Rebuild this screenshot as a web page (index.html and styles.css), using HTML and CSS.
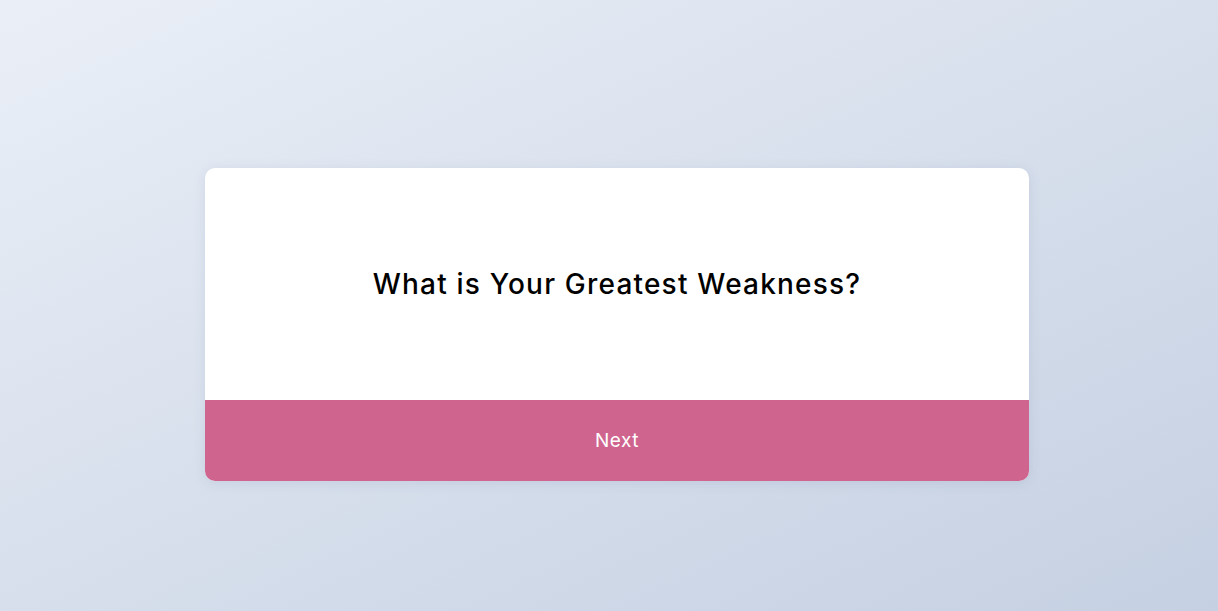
FILE: index.html
```html
<!DOCTYPE html>
<html lang="en">
<head>
<meta charset="utf-8">
<title>Question</title>
<link rel="stylesheet" href="styles.css">
</head>
<body>
<main class="page">
  <section class="card">
    <div class="card-body">
      <h1 class="question">What is Your Greatest Weakness?</h1>
    </div>
    <button class="next-btn" type="button">Next</button>
  </section>
</main>
</body>
</html>
```
FILE: styles.css
```css
* { box-sizing: border-box; }
html, body { margin: 0; height: 100%; }
body {
  font-family: "Inter", "Noto Sans", sans-serif;
  background: linear-gradient(155deg, #eaeff7 0%, #c5d0e2 100%);
}
.page {
  height: 611px;
  display: flex;
  align-items: center;
  justify-content: center;
  padding-left: 16px;
}
.card {
  width: 824px;
  height: 313px;
  margin-top: 38px;
  background: #ffffff;
  border-radius: 10px;
  overflow: hidden;
  display: flex;
  flex-direction: column;
  box-shadow: 0 2px 12px rgba(120, 135, 165, 0.18);
}
.card-body {
  height: 232px;
  display: flex;
  align-items: center;
  justify-content: center;
}
.question {
  margin: 0;
  font-size: 28px;
  font-weight: 500;
  color: #000;
  letter-spacing: 1.2px;
}
.next-btn {
  flex: 1;
  border: 0;
  background: #cf658f;
  color: #ffffff;
  font-family: inherit;
  font-size: 19px;
  font-weight: 400;
  letter-spacing: 0.5px;
  padding: 0;
}
```
